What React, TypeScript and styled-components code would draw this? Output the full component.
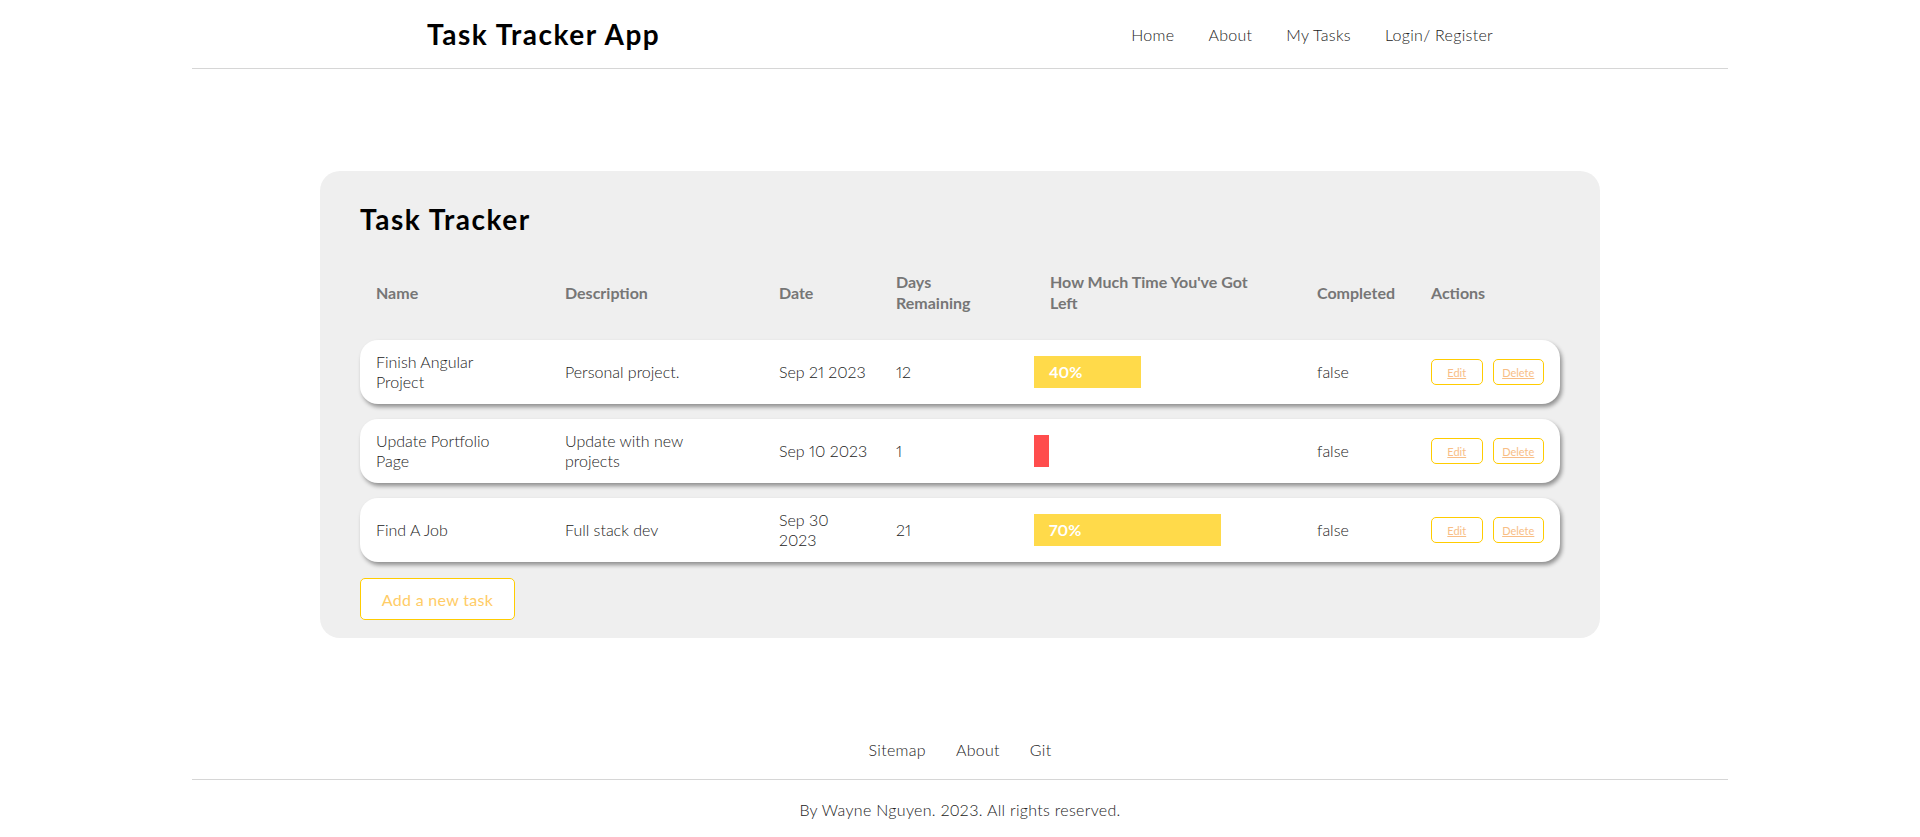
import styled, { createGlobalStyle } from 'styled-components';

const GlobalStyle = createGlobalStyle`
  html, body {
    margin: 0;
    padding: 0;
    background: #ffffff;
  }
  body {
    font-family: Lato, "Open Sans", sans-serif;
    font-size: 16px;
    font-weight: 300;
    color: #222222;
  }
  * {
    box-sizing: border-box;
  }
`;

const Page = styled.div`
  width: 1536px;
  margin: 0 auto;
`;

const Header = styled.header`
  display: flex;
  align-items: center;
  justify-content: space-between;
  height: 69px;
  padding: 0 235px;
  border-bottom: 1px solid #d6d6d6;
`;

const Brand = styled.h1`
  margin: 0;
  font-size: 28px;
  font-weight: 700;
  color: #000000;
  letter-spacing: 1.5px;
`;

const Nav = styled.nav`
  display: flex;
  gap: 34px;
  a {
    color: #222222;
    text-decoration: none;
    font-size: 16px;
    letter-spacing: 0.3px;
  }
`;

const Main = styled.main`
  display: flex;
  justify-content: center;
  padding-top: 102px;
`;

const Card = styled.section`
  width: 1280px;
  padding: 31px 40px 18px 40px;
  border-radius: 20px;
  background-color: #efefef;
`;

const CardTitle = styled.h2`
  margin: 0 0 22px;
  font-size: 28px;
  line-height: 35px;
  font-weight: 700;
  color: #000000;
  letter-spacing: 1.5px;
`;

const Table = styled.div`
  display: flex;
  flex-direction: column;
  gap: 15px;
`;

const columns = [
  { label: 'Name', width: 189 },
  { label: 'Description', width: 214 },
  { label: 'Date', width: 117 },
  { label: 'Days Remaining', width: 154, max: 90 },
  { label: "How Much Time You've Got Left", width: 267, max: 215 },
  { label: 'Completed', width: 114 },
  { label: 'Actions', width: 145 },
];

const Row = styled.div<{ $head?: boolean }>`
  display: grid;
  grid-template-columns: ${columns.map((c) => `${c.width}px`).join(' ')};
  align-items: center;
  min-height: 64px;
  border-radius: ${(props) => (props.$head ? '0' : '18px')};
  background-color: ${(props) => (props.$head ? 'transparent' : '#ffffff')};
  box-shadow: ${(props) =>
    props.$head ? 'none' : '2px 3px 4px rgba(0, 0, 0, 0.4)'};
`;

const HeadCell = styled.div<{ $max?: number }>`
  padding: 12px 16px;
  font-weight: 700;
  line-height: 21px;
  color: #767676;
  span {
    display: block;
    max-width: ${(props) => (props.$max ? `${props.$max}px` : 'none')};
  }
`;

const Cell = styled.div<{ $flush?: boolean; $text?: number }>`
  padding: ${(props) => (props.$flush ? '12px 0' : '12px 16px')};
  line-height: 20px;
  color: #222222;
  font-variant-numeric: proportional-nums;
  span {
    display: block;
    width: ${(props) => (props.$text ? `${props.$text}px` : 'auto')};
  }
`;

const Bar = styled.div<{ $low: boolean }>`
  display: flex;
  align-items: center;
  height: 32px;
  padding-left: 15px;
  background-color: ${(props) => (props.$low ? '#ff4d4d' : '#ffda4a')};
  color: #ffffff;
  font-weight: 700;
  white-space: nowrap;
  overflow: hidden;
`;

const Actions = styled.div`
  display: flex;
  gap: 10px;
  padding: 0 16px;
`;

const SmallButton = styled.a`
  display: flex;
  align-items: center;
  justify-content: center;
  width: 52px;
  height: 26px;
  border: 1px solid #ffcc00;
  border-radius: 5px;
  background: #ffffff;
  color: #f8be86;
  font-size: 11px;
  font-weight: 400;
  text-decoration: underline;
  cursor: pointer;
`;

const AddButton = styled.button`
  width: 155px;
  height: 42px;
  margin-top: 16px;
  padding: 0 20px;
  border: 1px solid #ffcc00;
  border-radius: 5px;
  background: #ffffff;
  color: #ffcc66;
  font-family: inherit;
  font-size: 16px;
  font-weight: 400;
  letter-spacing: 0.3px;
  cursor: pointer;
`;

const Footer = styled.footer`
  margin-top: 102px;
  letter-spacing: 0.3px;
`;

const FooterLinks = styled.nav`
  display: flex;
  justify-content: center;
  gap: 30px;
  padding-bottom: 19px;
  line-height: 20px;
  border-bottom: 1px solid #d6d6d6;
  a {
    color: #222222;
    text-decoration: none;
  }
`;

const Copyright = styled.p`
  margin: 0;
  padding-top: 20px;
  line-height: 20px;
  text-align: center;
  color: #222222;
`;

type Task = {
  name: string;
  description: string;
  date: string;
  days: number;
  completed: boolean;
};

const tasks: Task[] = [
  {
    name: 'Finish Angular Project',
    description: 'Personal project.',
    date: 'Sep 21 2023',
    days: 12,
    completed: false,
  },
  {
    name: 'Update Portfolio Page',
    description: 'Update with new projects',
    date: 'Sep 10 2023',
    days: 1,
    completed: false,
  },
  {
    name: 'Find A Job',
    description: 'Full stack dev',
    date: 'Sep 30 2023',
    days: 21,
    completed: false,
  },
];

function App() {
  return (
    <>
      <GlobalStyle />
      <Page>
        <Header>
          <Brand>Task Tracker App</Brand>
          <Nav>
            <a href='#'>Home</a>
            <a href='#'>About</a>
            <a href='#'>My Tasks</a>
            <a href='#'>Login/ Register</a>
          </Nav>
        </Header>
        <Main>
          <Card>
            <CardTitle>Task Tracker</CardTitle>
            <Table>
              <Row $head>
                {columns.map((col) => (
                  <HeadCell key={col.label} $max={col.max}>
                    <span>{col.label}</span>
                  </HeadCell>
                ))}
              </Row>
              {tasks.map((task) => {
                const pct = Math.round((task.days / 30) * 100);
                const low = pct < 10;
                return (
                  <Row key={task.name}>
                    <Cell $text={135}>
                      <span>{task.name}</span>
                    </Cell>
                    <Cell $text={140}>
                      <span>{task.description}</span>
                    </Cell>
                    <Cell $text={90}>
                      <span>{task.date}</span>
                    </Cell>
                    <Cell>{task.days}</Cell>
                    <Cell $flush>
                      <Bar $low={low} style={{ width: `${pct}%` }}>
                        {low ? '' : `${pct}%`}
                      </Bar>
                    </Cell>
                    <Cell>{String(task.completed)}</Cell>
                    <Actions>
                      <SmallButton>Edit</SmallButton>
                      <SmallButton>Delete</SmallButton>
                    </Actions>
                  </Row>
                );
              })}
            </Table>
            <AddButton>Add a new task</AddButton>
          </Card>
        </Main>
        <Footer>
          <FooterLinks>
            <a href='#'>Sitemap</a>
            <a href='#'>About</a>
            <a href='#'>Git</a>
          </FooterLinks>
          <Copyright>By Wayne Nguyen. 2023. All rights reserved.</Copyright>
        </Footer>
      </Page>
    </>
  );
}

export default App;
